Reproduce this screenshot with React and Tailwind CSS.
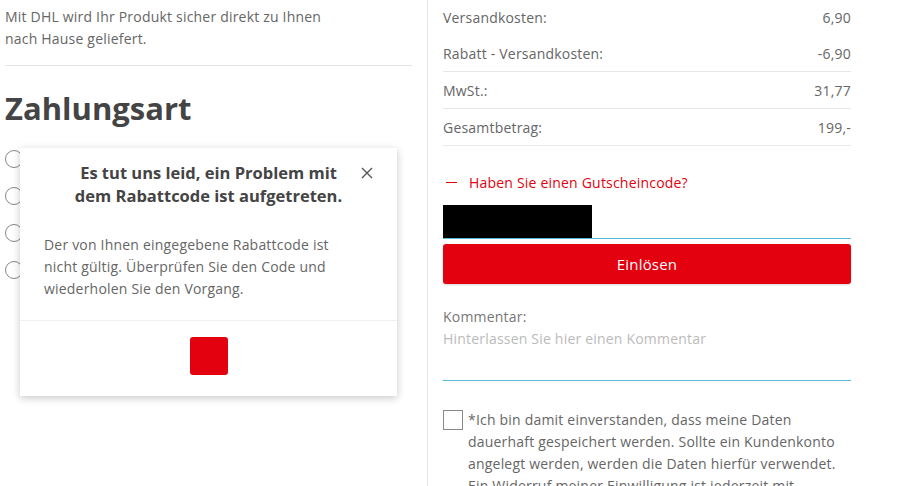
import React from "react";

const font = { fontFamily: '"Open Sans", "Liberation Sans", sans-serif' };

function Row({ label, value, border, h }) {
  return (
    <div className={`flex items-center justify-between text-[14px] text-[#666] ${h} ${border ? "border-b border-[#e8e8e8]" : ""}`}>
      <span>{label}</span>
      <span>{value}</span>
    </div>
  );
}

export default function App() {
  return (
    <div className="relative flex h-[486px] w-[900px] overflow-hidden bg-white tracking-[0.2px]" style={font}>
      {/* Left column */}
      <div className="w-[428px] shrink-0 border-r border-[#e6e6e6] pl-[5px] pr-[15px]">
        <p className="pt-[6px] text-[14px] leading-[22px] text-[#666]">
          Mit DHL wird Ihr Produkt sicher direkt zu Ihnen
          <br />
          nach Hause geliefert.
        </p>
        <div className="mt-[15px] border-t border-[#e4e4e4]" />
        <h2 className="mt-[20px] text-[31px] font-bold leading-[44px] tracking-normal text-[#444]">Zahlungsart</h2>
        <div className="mt-[20px] flex flex-col gap-[19px]">
          {[0, 1, 2, 3].map((i) => (
            <div key={i} className="h-[18px] w-[18px] rounded-full border-[1.5px] border-[#888]" />
          ))}
        </div>
      </div>

      {/* Right column */}
      <div className="w-[423px] pl-[15px] pt-0">
        <Row label="Versandkosten:" value="6,90" h="h-[35px]" />
        <Row label="Rabatt - Versandkosten:" value="-6,90" border h="h-[37px]" />
        <Row label="MwSt.:" value="31,77" border h="h-[37px]" />
        <Row label="Gesamtbetrag:" value="199,-" border h="h-[37px]" />
        <div className="mt-[26px] flex items-center text-[14px] text-[#e3000f]">
          <span className="ml-[3px] mr-[12px] inline-block h-[1.5px] w-[11px] bg-[#e3000f]" />
          Haben Sie einen Gutscheincode?
        </div>
        <div className="mt-[12px] border-b-[1.5px] border-[#56bad6]">
          <div className="h-[33px] w-[149px] bg-black" />
        </div>
        <button className="mt-[5px] flex h-[40px] w-full items-center justify-center rounded-[3px] bg-[#e3000f] text-[15px] text-white shadow-[0_1px_2px_rgba(0,0,0,0.15)]">
          Einlösen
        </button>
        <div className="mt-[22px] text-[14px] leading-[22px] text-[#777]">Kommentar:</div>
        <div className="text-[14px] leading-[22px] text-[#bbb]">Hinterlassen Sie hier einen Kommentar</div>
        <div className="mt-[30px] border-b-[1.5px] border-[#56bad6]" />
        <div className="mt-[28px] flex gap-[5px]">
          <div className="mt-[1px] h-[20px] w-[20px] shrink-0 border border-[#888]" />
          <p className="text-[14px] leading-[22px] text-[#666]">
            *Ich bin damit einverstanden, dass meine Daten dauerhaft gespeichert werden. Sollte ein Kundenkonto angelegt werden, werden die Daten hierfür verwendet. Ein Widerruf meiner Einwilligung ist jederzeit mit
          </p>
        </div>
      </div>

      {/* Modal */}
      <div className="absolute left-[20px] top-[148px] flex h-[248px] w-[377px] flex-col bg-white shadow-[0_2px_8px_rgba(0,0,0,0.22)]">
        <div className="relative px-[40px] pt-[13px]">
          <h3 className="text-center text-[16.5px] font-bold leading-[23px] tracking-normal text-[#444]">
            Es tut uns leid, ein Problem mit
            <br />
            dem Rabattcode ist aufgetreten.
          </h3>
          <svg className="absolute right-[24px] top-[19px]" width="12" height="12" viewBox="0 0 12 12">
            <path d="M1 1L11 11M11 1L1 11" stroke="#555" strokeWidth="1.4" />
          </svg>
        </div>
        <p className="px-[24px] pt-[27px] text-[14px] leading-[22px] text-[#666]">
          Der von Ihnen eingegebene Rabattcode ist
          <br />
          nicht gültig. Überprüfen Sie den Code und
          <br />
          wiederholen Sie den Vorgang.
        </p>
        <div className="mt-[20px] border-t border-[#f0f0f0]" />
        <div className="flex justify-center pt-[16px]">
          <div className="h-[38px] w-[38px] rounded-[3px] bg-[#e3000f]" />
        </div>
      </div>
    </div>
  );
}
